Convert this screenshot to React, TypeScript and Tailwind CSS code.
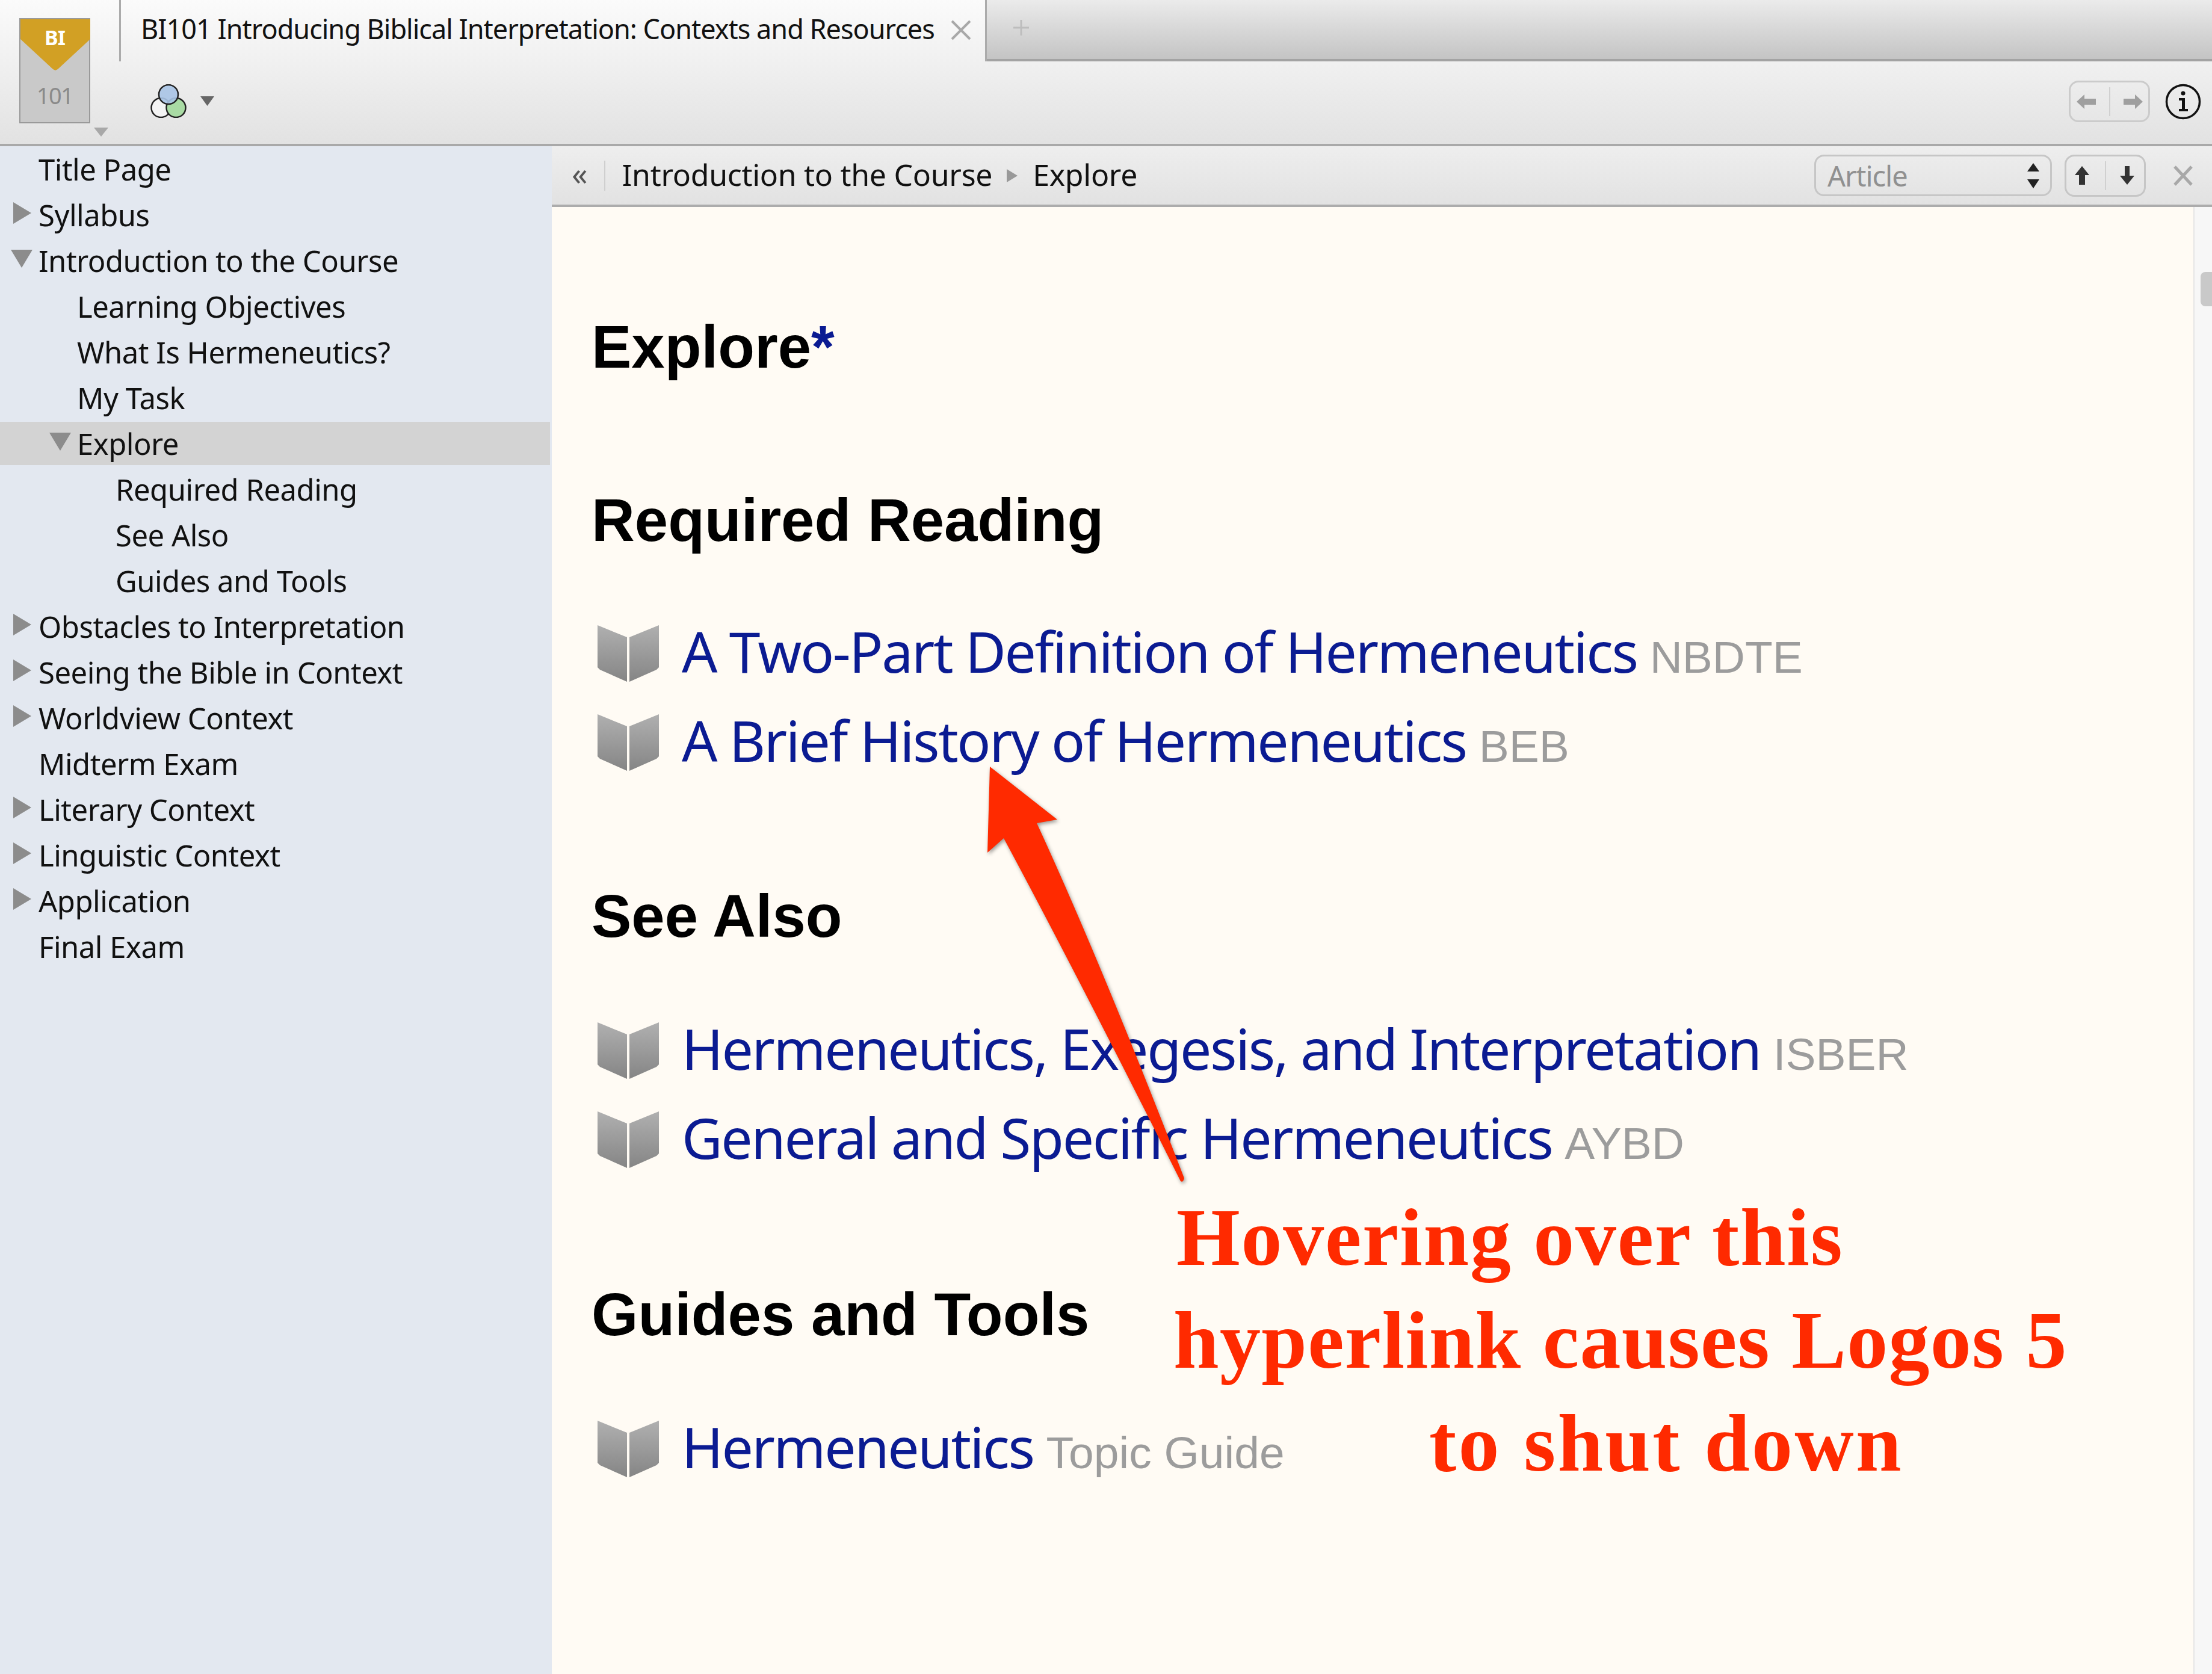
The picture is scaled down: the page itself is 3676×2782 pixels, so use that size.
import React from "react";

type Row = { label: string; level: 0 | 1 | 2; arrow?: "right" | "down"; active?: boolean };

const rows: Row[] = [
  { label: "Title Page", level: 0 },
  { label: "Syllabus", level: 0, arrow: "right" },
  { label: "Introduction to the Course", level: 0, arrow: "down" },
  { label: "Learning Objectives", level: 1 },
  { label: "What Is Hermeneutics?", level: 1 },
  { label: "My Task", level: 1 },
  { label: "Explore", level: 1, arrow: "down", active: true },
  { label: "Required Reading", level: 2 },
  { label: "See Also", level: 2 },
  { label: "Guides and Tools", level: 2 },
  { label: "Obstacles to Interpretation", level: 0, arrow: "right" },
  { label: "Seeing the Bible in Context", level: 0, arrow: "right" },
  { label: "Worldview Context", level: 0, arrow: "right" },
  { label: "Midterm Exam", level: 0 },
  { label: "Literary Context", level: 0, arrow: "right" },
  { label: "Linguistic Context", level: 0, arrow: "right" },
  { label: "Application", level: 0, arrow: "right" },
  { label: "Final Exam", level: 0 },
];

const indent = { 0: "w-[64px]", 1: "w-[128px]", 2: "w-[192px]" };

function Tri({ dir }: { dir: "right" | "down" }) {
  return dir === "right" ? (
    <svg width="30" height="36" viewBox="0 0 30 36" className="mr-[12px] mt-[-6px]">
      <polygon points="0,0 30,18 0,36" fill="#8c8c8c" />
    </svg>
  ) : (
    <svg width="36" height="30" viewBox="0 0 36 30" className="mr-[10px] mt-[-6px]">
      <polygon points="0,0 36,0 18,30" fill="#8c8c8c" />
    </svg>
  );
}

function Book() {
  return (
    <svg width="102" height="94" viewBox="0 0 102 94" className="shrink-0">
      <defs>
        <linearGradient id="bookFill" x1="0" y1="0" x2="0" y2="1">
          <stop offset="0" stopColor="#b0b0b0" />
          <stop offset="1" stopColor="#858585" />
        </linearGradient>
      </defs>
      <polygon points="0,0 49,20 49,94 4,74 0,70" fill="url(#bookFill)" />
      <polygon points="53,20 102,0 102,70 98,74 53,94" fill="url(#bookFill)" />
    </svg>
  );
}

function LinkRow({ title, tag, mt }: { title: string; tag: string; mt?: string }) {
  return (
    <div className={`flex items-center h-[148px] pl-[10px] ${mt ?? ""}`}>
      <Book />
      <div className="ml-[38px] flex items-baseline whitespace-nowrap mt-[2px]">
        <span className="font-['Noto_Sans'] text-[93px] leading-[100px] text-[#0b1b92] tracking-[-2.4px]">{title}</span>
        <span className="ml-[21px] font-['Liberation_Sans'] text-[75px] leading-[100px] text-[#9c9c9c]">{tag}</span>
      </div>
    </div>
  );
}

function Heading({ children, mt }: { children: React.ReactNode; mt: string }) {
  return (
    <h2 className={`font-['Liberation_Sans'] font-bold text-[99.5px] leading-[100px] text-black whitespace-nowrap ${mt}`}>
      {children}
    </h2>
  );
}

export default function App() {
  return (
    <div className="relative w-[3676px] h-[2782px] overflow-hidden flex flex-col font-['Noto_Sans',sans-serif] text-[#111]">
      {/* Top chrome */}
      <header className="flex h-[243px] shrink-0 border-b-[4px] border-[#a9a9a9] bg-gradient-to-b from-[#fbfbfb] to-[#e2e2e2]">
        <div className="relative w-[198px] shrink-0 pl-[32px] pt-[30px]">
          <div className="relative w-[118px] h-[175px] bg-[#c9c9c9] border-[2px] border-[#9a9a9a] flex flex-col items-center">
            <svg width="116" height="86" viewBox="0 0 116 86" className="absolute left-0 top-0">
              <polygon points="0,0 116,0 116,33 62,83 58,85 54,83 0,33" fill="#d2a024" />
            </svg>
            <span className="relative mt-[12px] font-bold text-[34px] leading-[36px] text-white tracking-[-1px]">BI</span>
            <span className="mt-[58px] text-[38px] leading-[40px] text-[#8a8a8a] tracking-[-1.5px]">101</span>
          </div>
          <svg width="24" height="15" viewBox="0 0 24 15" className="absolute left-[156px] top-[212px]">
            <polygon points="0,0 24,0 12,15" fill="#a8a8a8" />
          </svg>
        </div>
        <div className="flex-1 flex flex-col min-w-0">
          <div className="flex h-[102px] shrink-0">
            <div className="flex items-center w-[1442px] shrink-0 border-l-[3px] border-r-[3px] border-[#ababab] pl-[33px] pr-[22px]">
              <span className="flex-1 text-[45px] leading-[50px] mt-[-6px] whitespace-nowrap tracking-[-1px]">
                BI101 Introducing Biblical Interpretation: Contexts and Resources
              </span>
              <svg width="36" height="36" viewBox="0 0 36 36" className="mt-[-2px]">
                <path d="M3 3L33 33M33 3L3 33" stroke="#a8a8a8" strokeWidth="4" />
              </svg>
            </div>
            <div className="flex-1 flex items-center pl-[44px] bg-gradient-to-b from-[#ebebeb] to-[#c4c4c4] border-b-[4px] border-[#a3a3a3]">
              <svg width="26" height="26" viewBox="0 0 26 26" className="mt-[-6px]">
                <path d="M13 0V26M0 13H26" stroke="#bdbdbd" strokeWidth="3" />
              </svg>
            </div>
          </div>
          <div className="flex-1 flex items-center pl-[52px] pr-[18px]">
            <svg width="60" height="56" viewBox="0 0 60 56" className="mt-[-6px]">
              <circle cx="17.5" cy="39" r="16" fill="#f4f4f4" stroke="#222" strokeWidth="2.5" />
              <circle cx="42.5" cy="39" r="16" fill="#a9dba4" stroke="#222" strokeWidth="2.5" />
              <circle cx="30" cy="17" r="16" fill="#a9c4e6" fillOpacity="0.9" stroke="#222" strokeWidth="2.5" />
            </svg>
            <svg width="23" height="16" viewBox="0 0 23 16" className="ml-[23px] mt-[-6px]">
              <polygon points="0,0 23,0 11.5,16" fill="#666" />
            </svg>
            <div className="ml-auto flex items-center">
              <div className="flex items-center w-[135px] h-[69px] rounded-[16px] border-[3px] border-[#cbcbcb] mt-[-4px]">
                <svg width="32" height="24" viewBox="0 0 32 24" className="ml-[10px]">
                  <polygon points="0,12 13,0 13,7 32,7 32,17 13,17 13,24" fill="#9f9f9f" />
                </svg>
                <div className="w-[2px] h-[48px] bg-[#d0d0d0] ml-[22px]" />
                <svg width="32" height="24" viewBox="0 0 32 24" className="ml-[22px]">
                  <polygon points="32,12 19,0 19,7 0,7 0,17 19,17 19,24" fill="#9f9f9f" />
                </svg>
              </div>
              <svg width="60" height="60" viewBox="0 0 60 60" className="ml-[25px] mt-[-4px]">
                <circle cx="30" cy="30" r="27.5" fill="none" stroke="#111" strokeWidth="3.5" />
                <circle cx="30" cy="16" r="3.5" fill="#111" />
                <path d="M23 24H33V42H38V46H23V42H28V28H23Z" fill="#111" />
              </svg>
            </div>
          </div>
        </div>
      </header>

      <div className="flex flex-1 min-h-0">
        {/* Sidebar */}
        <aside className="w-[917px] shrink-0 bg-[#e3e8f0] pr-[3px]">
          {rows.map((r) => (
            <div
              key={r.label}
              className={`flex items-center ${r.active ? "h-[72px] my-[2px] bg-[#d3d3d3]" : "h-[76px]"}`}
            >
              <div className={`${indent[r.level]} shrink-0 flex justify-end`}>{r.arrow && <Tri dir={r.arrow} />}</div>
              <span className="text-[49px] leading-[60px] whitespace-nowrap tracking-[-0.5px]">{r.label}</span>
            </div>
          ))}
        </aside>

        {/* Main */}
        <main className="flex-1 min-w-0 flex flex-col">
          <div className="flex items-center h-[101px] shrink-0 border-b-[4px] border-[#acacac] bg-gradient-to-b from-[#eeeeee] to-[#e2e2e2] pr-[32px]">
            <span className="ml-[33px] text-[52px] leading-[60px] text-[#555] mt-[-8px]">«</span>
            <div className="w-[2px] h-[50px] bg-[#cfcfcf] ml-[28px] mr-[27px]" />
            <span className="text-[50px] leading-[60px] whitespace-nowrap tracking-[-0.3px] mt-[-4px]">Introduction to the Course</span>
            <svg width="18" height="22" viewBox="0 0 18 22" className="ml-[24px] mr-[25px]">
              <polygon points="0,0 18,11 0,22" fill="#999" />
            </svg>
            <span className="text-[50px] leading-[60px] tracking-[-0.3px] mt-[-4px]">Explore</span>

            <div className="ml-auto flex items-center w-[395px] h-[69px] rounded-[16px] border-[3px] border-[#c6c6c6] pl-[19px] pr-[18px]">
              <span className="text-[47px] leading-[60px] text-[#909090] tracking-[-1px]">Article</span>
              <svg width="20" height="42" viewBox="0 0 20 42" className="ml-auto">
                <polygon points="10,0 20,14 0,14" fill="#222" />
                <polygon points="0,27 20,27 10,42" fill="#222" />
              </svg>
            </div>
            <div className="flex items-center w-[135px] h-[70px] rounded-[16px] border-[3px] border-[#c6c6c6] ml-[21px]">
              <svg width="24" height="31" viewBox="0 0 24 31" className="ml-[14px]">
                <polygon points="12,0 24,15 17,15 17,31 7,31 7,15 0,15" fill="#333" />
              </svg>
              <div className="w-[2px] h-[48px] bg-[#d0d0d0] ml-[26px]" />
              <svg width="24" height="31" viewBox="0 0 24 31" className="ml-[23px]">
                <polygon points="12,31 24,16 16,16 16,0 8,0 8,16 0,16" fill="#333" />
              </svg>
            </div>
            <svg width="32" height="34" viewBox="0 0 32 34" className="ml-[46px]">
              <path d="M2 2L30 32M30 2L2 32" stroke="#a8a8a8" strokeWidth="5" />
            </svg>
          </div>

          <div className="flex flex-1 min-h-0">
            <article className="flex-1 min-w-0 bg-[#fffbf4] pl-[66px] pt-[183px]">
              <Heading mt="">
                Explore<span className="text-[#0b1b92]">*</span>
              </Heading>
              <Heading mt="mt-[188px]">Required Reading</Heading>
              <LinkRow mt="mt-[97px]" title="A Two-Part Definition of Hermeneutics" tag="NBDTE" />
              <LinkRow title="A Brief History of Hermeneutics" tag="BEB" />
              <Heading mt="mt-[165px]">See Also</Heading>
              <LinkRow mt="mt-[99px]" title="Hermeneutics, Exegesis, and Interpretation" tag="ISBER" />
              <LinkRow title="General and Specific Hermeneutics" tag="AYBD" />
              <Heading mt="mt-[167px]">Guides and Tools</Heading>
              <LinkRow mt="mt-[99px]" title="Hermeneutics" tag="Topic Guide" />
            </article>
            <div className="w-[31px] shrink-0 border-l-[2px] border-[#e6e6e6] bg-[#f7f7f7] pt-[108px] flex justify-end">
              <div className="w-[19px] h-[57px] rounded-l-[8px] bg-[#c9c9c9]" />
            </div>
          </div>
        </main>
      </div>

      {/* Annotation arrow over the page */}
      <svg
        width="350"
        height="720"
        viewBox="1630 1260 350 720"
        className="absolute left-[1630px] top-[1260px] drop-shadow-[2px_3px_3px_rgba(0,0,0,0.4)]"
      >
        <path
          d="M1645 1274L1757 1362L1723 1368Q1830 1600 1968 1958Q1966 1966 1962 1963Q1790 1620 1668 1393L1641 1417Z"
          fill="#ff2a00"
        />
      </svg>

      {/* Annotation text over the page */}
      <div className="absolute left-[1950px] top-[1971px] font-['Liberation_Serif'] font-bold text-[136px] leading-[171px] text-[#ff2a00] whitespace-nowrap">
        <div className="pl-[5px] tracking-[1.7px]">Hovering over this</div>
        <div className="tracking-[1.3px]">hyperlink causes Logos 5</div>
        <div className="pl-[425px] tracking-[3.3px]">to shut down</div>
      </div>
    </div>
  );
}
